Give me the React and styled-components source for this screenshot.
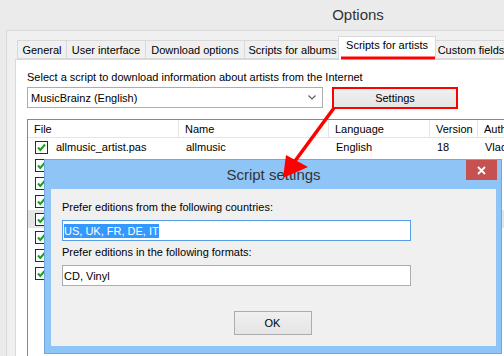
import styled, { createGlobalStyle } from "styled-components";

const GlobalStyle = createGlobalStyle`
  html, body {
    margin: 0;
    padding: 0;
  }
  body {
    font-family: "Liberation Sans", Arial, sans-serif;
    font-size: 11px;
    color: #000;
  }
`;

const Screen = styled.div`
  position: relative;
  width: 504px;
  height: 356px;
  overflow: hidden;
  background: #ebebeb;
`;

const OptionsWindow = styled.div`
  width: 716px;
  display: flex;
  flex-direction: column;
`;

const TitleBar = styled.div`
  height: 30px;
  line-height: 30px;
  text-align: center;
  font-size: 15px;
  color: #333;
`;

const Client = styled.div`
  margin-left: 6px;
  height: 330px;
  border-top: 1px solid #d9d9d9;
  border-left: 1px solid #d9d9d9;
  background: #f0f0f0;
  padding: 5px 0 0 8px;
  display: flex;
  flex-direction: column;
`;

const TabStrip = styled.div`
  display: flex;
  align-items: flex-end;
  height: 23px;
  padding-left: 2px;
  position: relative;
  z-index: 1;
`;

const Tab = styled.div`
  box-sizing: border-box;
  width: ${(p) => p.w}px;
  height: ${(p) => (p.active ? 24 : 19)}px;
  margin: ${(p) => (p.active ? "0 -2px -1px -3px" : "0 0 0 -1px")};
  padding-top: ${(p) => (p.active ? 2 : 3)}px;
  border: 1px solid #d9d9d9;
  border-bottom: ${(p) => (p.active ? "none" : "1px solid #d9d9d9")};
  background: ${(p) => (p.active ? "#fff" : "#f0f0f0")};
  text-align: center;
  white-space: nowrap;
  position: relative;
  z-index: ${(p) => (p.active ? 2 : 1)};
  &:first-child {
    margin-left: 0;
  }
`;

const TabPage = styled.div`
  flex: 1;
  border: 1px solid #d9d9d9;
  background: #fff;
  padding: 10px 0 0 11px;
  display: flex;
  flex-direction: column;
`;

const Hint = styled.div`
  line-height: 15px;
  white-space: nowrap;
`;

const ControlRow = styled.div`
  display: flex;
  align-items: flex-start;
  gap: 9px;
  margin-top: 2px;
`;

const ComboBox = styled.div`
  box-sizing: border-box;
  width: 296px;
  height: 21px;
  border: 1px solid #abadb3;
  background: #fff;
  display: flex;
  align-items: center;
  justify-content: space-between;
  padding: 0 6px 0 3px;
`;

const PushButton = styled.div`
  box-sizing: border-box;
  width: ${(p) => p.w}px;
  height: ${(p) => p.h}px;
  border: ${(p) => (p.marked ? "2px solid #f00" : "1px solid #acacac")};
  background: linear-gradient(#f0f0f0, #e5e5e5);
  display: flex;
  align-items: center;
  justify-content: center;
`;

const ListView = styled.div`
  margin-top: 10px;
  width: 640px;
  flex: 1;
  border: 1px solid #828790;
  background: #fff;
`;

const ListRow = styled.div`
  display: flex;
  height: 18px;
  box-sizing: border-box;
  align-items: center;
  background: ${(p) => (p.selected ? "#e5e5e5" : "transparent")};
  ${(p) => p.header && "border-bottom: 1px solid #e5e5e5;"}
`;

const Cell = styled.div`
  box-sizing: border-box;
  width: ${(p) => p.w}px;
  height: 100%;
  display: flex;
  align-items: center;
  gap: 8px;
  padding-left: ${(p) => (p.header ? 6 : 7)}px;
  white-space: nowrap;
  ${(p) => p.header && "border-right: 1px solid #e5e5e5;"}
`;

const CheckBox = styled.span`
  box-sizing: border-box;
  width: 13px;
  height: 13px;
  border: 1px solid #1c2b5a;
  background: #fff;
  display: inline-flex;
  flex-shrink: 0;
`;

const Dialog = styled.div`
  position: absolute;
  left: 44px;
  top: 159px;
  width: 458px;
  height: 195px;
  box-sizing: border-box;
  border: 1px solid #6fa8dc;
  background: #8ec5f6;
  padding: 0 5px 7px 6px;
  display: flex;
  flex-direction: column;
  z-index: 5;
`;

const DialogTitle = styled.div`
  height: 29px;
  display: grid;
  grid-template-columns: 1fr auto 1fr;
  align-items: start;
`;

const DialogCaption = styled.div`
  grid-column: 2;
  line-height: 29px;
  font-size: 15px;
  color: #333;
`;

const CloseButton = styled.div`
  grid-column: 3;
  justify-self: end;
  margin-right: -1px;
  width: 31px;
  height: 20px;
  background: #c75050;
  color: #fff;
  display: flex;
  align-items: center;
  justify-content: center;
`;

const DialogBody = styled.div`
  flex: 1;
  background: #f0f0f0;
  padding: 11px 11px 0 11px;
  display: flex;
  flex-direction: column;
`;

const FieldLabel = styled.div`
  line-height: 15px;
  margin-top: ${(p) => p.gap || 0}px;
`;

const TextField = styled.div`
  box-sizing: border-box;
  width: 349px;
  height: 21px;
  margin-top: 5px;
  border: 1px solid ${(p) => (p.focused ? "#569de5" : "#abadb3")};
  background: #fff;
  display: flex;
  align-items: center;
  padding-left: 1px;
  white-space: nowrap;
`;

const Selection = styled.span`
  background: #3399ff;
  color: #fff;
  line-height: 14px;
`;

const OkRow = styled.div`
  margin-top: 25px;
  display: flex;
  justify-content: center;
  padding-right: 2px;
`;

const Overlay = styled.svg`
  position: absolute;
  left: 0;
  top: 0;
  z-index: 10;
  pointer-events: none;
`;

const Check = () => (
  <CheckBox>
    <svg width="11" height="11" viewBox="0 0 11 11">
      <path d="M2 5.5 L4.3 8 L9 2.5" fill="none" stroke="#1e9e1e" strokeWidth="2" />
    </svg>
  </CheckBox>
);

const tabs = [
  { label: "General", w: 50 },
  { label: "User interface", w: 80 },
  { label: "Download options", w: 100 },
  { label: "Scripts for albums", w: 97 },
  { label: "Scripts for artists", w: 98, active: true },
  { label: "Custom fields", w: 76 },
];

const columns = [
  { label: "File", w: 151 },
  { label: "Name", w: 150 },
  { label: "Language", w: 101 },
  { label: "Version", w: 48 },
  { label: "Author", w: 120 },
];

export default function App() {
  return (
    <>
      <GlobalStyle />
      <Screen>
        <OptionsWindow>
          <TitleBar>Options</TitleBar>
          <Client>
            <TabStrip>
              {tabs.map((t) => (
                <Tab key={t.label} w={t.w} active={t.active}>
                  {t.label}
                </Tab>
              ))}
            </TabStrip>
            <TabPage>
              <Hint>Select a script to download information about artists from the Internet</Hint>
              <ControlRow>
                <ComboBox>
                  <span>MusicBrainz (English)</span>
                  <svg width="8" height="5" viewBox="0 0 8 5">
                    <path d="M0.5 0.5 L4 4 L7.5 0.5" fill="none" stroke="#606060" strokeWidth="1.2" />
                  </svg>
                </ComboBox>
                <PushButton w={126} h={22} marked>
                  Settings
                </PushButton>
              </ControlRow>
              <ListView>
                <ListRow header>
                  {columns.map((c) => (
                    <Cell key={c.label} w={c.w} header>
                      {c.label}
                    </Cell>
                  ))}
                </ListRow>
                <ListRow>
                  <Cell w={151}>
                    <Check />
                    allmusic_artist.pas
                  </Cell>
                  <Cell w={150}>allmusic</Cell>
                  <Cell w={101}>English</Cell>
                  <Cell w={48}>18</Cell>
                  <Cell w={120}>Vladimir</Cell>
                </ListRow>
                {[0, 1, 2, 3, 4, 5, 6].map((i) => (
                  <ListRow key={i} selected={i === 3}>
                    <Cell w={151}>
                      <Check />
                    </Cell>
                  </ListRow>
                ))}
              </ListView>
            </TabPage>
          </Client>
        </OptionsWindow>

        <Dialog>
          <DialogTitle>
            <DialogCaption>Script settings</DialogCaption>
            <CloseButton>
              <svg width="9" height="9" viewBox="0 0 9 9">
                <path d="M1 1 L8 8 M8 1 L1 8" stroke="#fff" strokeWidth="1.8" />
              </svg>
            </CloseButton>
          </DialogTitle>
          <DialogBody>
            <FieldLabel>Prefer editions from the following countries:</FieldLabel>
            <TextField focused>
              <Selection>US, UK, FR, DE, IT</Selection>
            </TextField>
            <FieldLabel gap={4}>Prefer editions in the following formats:</FieldLabel>
            <TextField>CD, Vinyl</TextField>
            <OkRow>
              <PushButton w={78} h={24}>
                OK
              </PushButton>
            </OkRow>
          </DialogBody>
        </Dialog>

        <Overlay width="504" height="356" viewBox="0 0 504 356">
          <line x1="341" y1="58" x2="435" y2="58" stroke="#f00" strokeWidth="3" />
          <line x1="334" y1="108" x2="295" y2="161" stroke="#f00" strokeWidth="3.5" />
          <polygon points="283,178 286,155 308,167" fill="#f00" />
        </Overlay>
      </Screen>
    </>
  );
}
